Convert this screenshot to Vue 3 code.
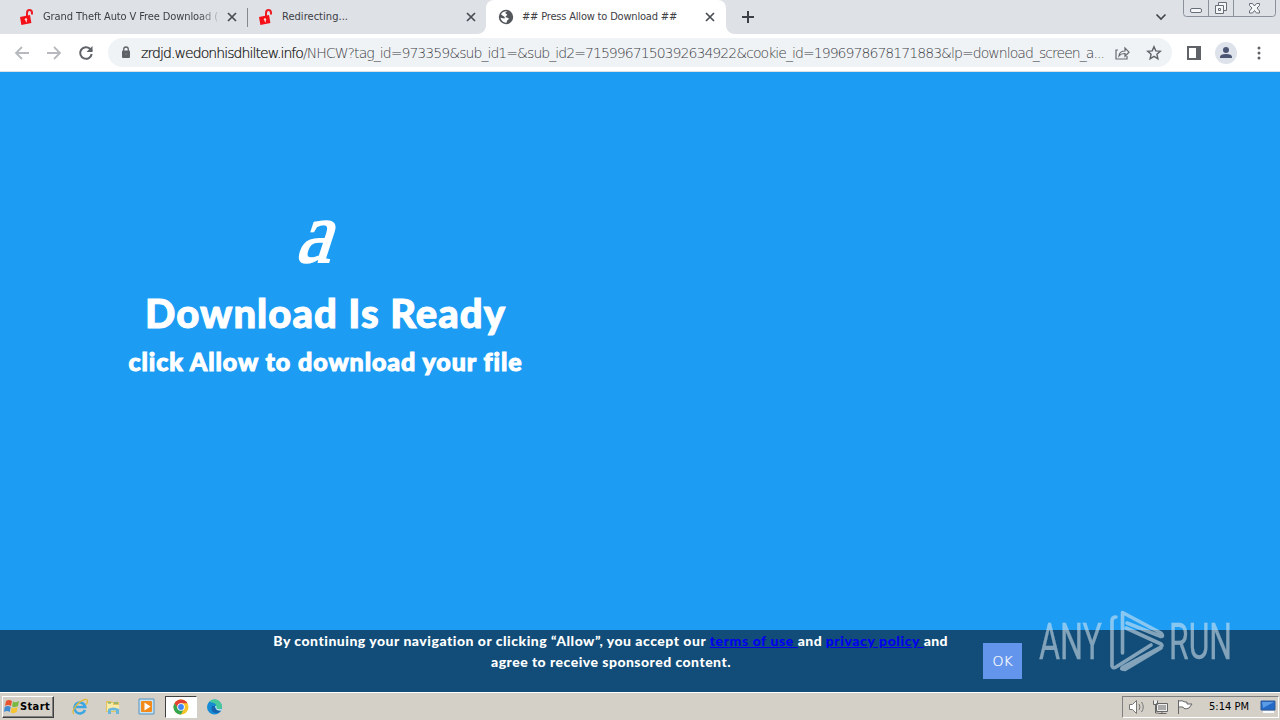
<script setup>
// Adjusts tracking so a label occupies the given width.
const vFit = {
  mounted(el, { value }) {
    const width = el.getBoundingClientRect().width
    el.style.letterSpacing = (value - width) / el.textContent.length + 'px'
  },
}
</script>

<template>
  <div class="screen">
    <header class="tabs">
      <div class="tab first">
        <svg class="lock" width="16" height="18" viewBox="0 0 16 18"><path d="M8 8V5Q8 2 10.500 2T13 5V6.500" fill="none" stroke="#ed1c24" stroke-width="2"/><path d="M1 9l10-2 1.400 8-10 2z" fill="#f50f16"/><circle cx="7" cy="11.400" r="1.200" fill="#ffd9d9"/><path d="M6.600 12h1l.3 2.200h-1z" fill="#ffd9d9"/></svg>
        <span class="title fade"><span v-fit="175">Grand Theft Auto V Free Download (</span></span>
        <svg class="close" width="10" height="10" viewBox="0 0 10 10"><path d="M1 1l8 8M9 1L1 9"/></svg>
      </div>
      <div class="tab second">
        <svg class="lock" width="16" height="18" viewBox="0 0 16 18"><path d="M8 8V5Q8 2 10.500 2T13 5V6.500" fill="none" stroke="#ed1c24" stroke-width="2"/><path d="M1 9l10-2 1.400 8-10 2z" fill="#f50f16"/><circle cx="7" cy="11.400" r="1.200" fill="#ffd9d9"/><path d="M6.600 12h1l.3 2.200h-1z" fill="#ffd9d9"/></svg>
        <span class="title"><span v-fit="66">Redirecting...</span></span>
        <svg class="close" width="10" height="10" viewBox="0 0 10 10"><path d="M1 1l8 8M9 1L1 9"/></svg>
      </div>
      <div class="tab active">
        <svg class="globe" width="16" height="16" viewBox="0 0 16 16"><circle cx="8" cy="8" r="7.200" fill="#54585d"/><path d="M9.500 2.300C7 3 6.800 4.500 8.500 5c1.300.5.500 1.500-.5 2-.7.500-.6 1.300.5 1.500l1.700.4c1 .3.500 1.600-.5 2-.8.400-.6 1.500-1.200 2.800-3 0-5.400-2.200-6-5l3.700.8c1 0 .8-1 .3-1.500C5.500 7 4 6.500 3 5.300 4.300 3 6.500 1.900 9.500 2.300z" fill="#fff"/></svg>
        <span class="title"><span v-fit="155">## Press Allow to Download ##</span></span>
        <svg class="close" width="10" height="10" viewBox="0 0 10 10"><path d="M1 1l8 8M9 1L1 9"/></svg>
      </div>
      <svg class="plus" width="12" height="12" viewBox="0 0 12 12"><path d="M6 0v12M0 6h12"/></svg>
      <svg class="chevron" width="12" height="8" viewBox="0 0 12 8"><path d="M1.500 1.500L6 6l4.500-4.500"/></svg>
      <svg class="controls" width="94" height="18" viewBox="0 0 94 18"><g fill="none" stroke="#8b919b"><path d="M.5 0v13.500q0 3 3 3h86q3 0 3-3V0M25.500 0v16M50.500 0v16"/><g stroke="#686e78" fill="#f5f6f8"><rect x="7.500" y="8.500" width="11" height="4" rx="1.500"/><path d="M35.500 2.500h8v8h-8z"/><path d="M32.500 5.500h8v8h-8zM35.500 8.500h2v2h-2z"/><path d="M66.500 3.500h3l2 2.500 2-2.500h3v2L74 8l2.500 3v2h-3l-2-2.500-2 2.500h-3v-2L69 8l-2.500-2.500z"/></g></g></svg>
    </header>

    <nav class="toolbar">
      <svg class="back" width="16" height="14" viewBox="0 0 16 14"><path d="M15 7H2M8 1L2 7l6 6"/></svg>
      <svg class="forward" width="16" height="14" viewBox="0 0 16 14"><path d="M1 7h13M8 1l6 6-6 6"/></svg>
      <svg class="reload" width="16" height="16" viewBox="0 0 16 16"><path d="M13.700 9A5.800 5.800 0 1 1 12 3.800L14 6" fill="none" stroke="#5f6368" stroke-width="2"/><path d="M14.500 1v6H8.500z" fill="#5f6368"/></svg>
      <div class="omnibox">
        <svg class="secure" width="10" height="13" viewBox="0 0 10 13"><rect x="1" y="4.500" width="8" height="7.500" rx="1" fill="#5f6368"/><path d="M2.700 5V3.300a2.300 2.300 0 0 1 4.600 0V5" fill="none" stroke="#5f6368" stroke-width="1.300"/><circle cx="5" cy="8" r="1" fill="#777"/></svg>
        <span class="url"><span class="host" v-fit="162">zrdjd.wedonhisdhiltew.info</span><span v-fit="801">/NHCW?tag_id=973359&amp;sub_id1=&amp;sub_id2=7159967150392634922&amp;cookie_id=1996978678171883&amp;lp=download_screen_a...</span></span>
        <svg class="share" width="17" height="16" viewBox="0 0 17 16"><path d="M4 5H2v9h11v-3M5 11q.5-5 6-5V3l4 4.200-4 4V8.500Q7 8.300 5 11z" fill="none" stroke="#666a70" stroke-width="1.200"/></svg>
        <svg class="star" width="16" height="16" viewBox="0 0 16 16"><path d="M8 1.700l1.800 4.200 4.500.4-3.400 3 1 4.500L8 11.400l-3.900 2.400 1-4.500-3.400-3 4.500-.4z" fill="none" stroke="#5f6368" stroke-width="1.400"/></svg>
      </div>
      <svg class="panel" width="14" height="14" viewBox="0 0 14 14"><path d="M1 1h12v12H1z" fill="none" stroke="#5f6368" stroke-width="2"/><path d="M9 1h4v12H9z" fill="#5f6368"/></svg>
      <svg class="avatar" width="22" height="22" viewBox="0 0 22 22"><circle cx="11" cy="11" r="11" fill="#dee2ea"/><circle cx="11" cy="8" r="3" fill="#4c5674"/><path d="M5 16v-1q0-3 6-3t6 3v1z" fill="#4c5674"/></svg>
      <svg class="dots" width="4" height="14" viewBox="0 0 4 14"><g fill="#5f6368"><circle cx="2" cy="2" r="1.500"/><circle cx="2" cy="7" r="1.500"/><circle cx="2" cy="12" r="1.500"/></g></svg>
    </nav>

    <main>
      <section class="message">
        <div class="emblem">a</div>
        <h1><span v-fit="361">Download Is Ready</span></h1>
        <h2><span v-fit="394">click Allow to download your file</span></h2>
      </section>
      <footer class="consent">
        <p>
          <span class="line"><span v-fit="437">By continuing your navigation or clicking “Allow”, you accept our </span><a v-fit="88">terms of use </a><span v-fit="28">and </span><a v-fit="98">privacy policy </a><span v-fit="24">and</span></span>
          <span class="line second-line"><span v-fit="240">agree to receive sponsored content.</span></span>
        </p>
        <button><span v-fit="20">OK</span></button>
      </footer>
      <svg class="watermark" width="200" height="72" viewBox="0 0 200 72">
        <g fill="#e4edf2" stroke="#e4edf2" stroke-width=".3" font-family="Roboto, sans-serif" font-size="50">
          <text x="3" y="54" textLength="63" lengthAdjust="spacingAndGlyphs">ANY</text>
          <text x="133" y="54" textLength="63" lengthAdjust="spacingAndGlyphs">RUN</text>
        </g>
        <g fill="none" stroke="#e4edf2" stroke-width="3.600" stroke-linecap="round" stroke-linejoin="round">
          <path d="M86.500 48V7.500L125 28q3 3 0 3.500L91 18"/>
          <path d="M80 12q-4 0-4 4v45q1 3 4 1l35-22"/>
          <path d="M90 23l35 16q2 1.500 0 3L89 61q-4 2-3 3l3 .5L125 43"/>
        </g>
      </svg>
    </main>

    <div class="taskbar">
      <div class="start">
        <svg width="17" height="16" viewBox="0 0 17 16"><path d="M3 2q3-2 6 0L8 7Q5 5 2 7z" fill="#e8542d"/><path d="M10 2.500q3 1.500 6-.5l-1 5q-3 2-6 .5z" fill="#79b843"/><path d="M1.700 8Q5 6 7.700 8l-1 5Q4 11 1 13z" fill="#438bd1"/><path d="M8.700 8.500q3 1.500 6-.5l-1 5q-3 2-6 .5z" fill="#f6c431"/></svg>
        <b v-fit="30">Start</b>
      </div>
      <svg class="app ie" width="18" height="18" viewBox="0 0 18 18"><path d="M14 12A5.500 5.500 0 1 1 14.300 9H5" fill="none" stroke="#3da5e2" stroke-width="2.500"/><path d="M3 16C-1 14 7 3 14 1.500c4-.4 2.500 3 1 5" fill="none" stroke="#e0b83b" stroke-width="1.300"/></svg>
      <svg class="app folder" width="16" height="18" viewBox="0 0 16 18"><path d="M1 3h5l1 1h7v10H1z" fill="#dfc466"/><path d="M2 5h6v2h6v6H2z" fill="#fbeba6"/><path d="M3 5h3M9 5h4" stroke="#57a66a"/><path d="M3 11q5-3 11 0v5h-3v-3.500H6V16H3z" fill="#69b7dc"/></svg>
      <svg class="app media" width="17" height="18" viewBox="0 0 17 18"><path d="M1 1h15v15H1z" fill="#c3e3f5" stroke="#5795bf"/><rect x="3" y="3" width="11" height="11" rx="1" fill="#f28b19"/><path d="M6.500 4.500l6 4-6 4z" fill="#fff"/></svg>
      <div class="current"><svg width="16" height="16" viewBox="0 0 16 16"><circle cx="8" cy="8" r="7.500" fill="#f7c52b"/><path d="M1.500 4.200A7.500 7.500 0 0 1 14.500 4.200H8L5 10z" fill="#e34133"/><path d="M1.500 4.200A7.500 7.500 0 0 0 8 15.500l3-6H5z" fill="#35a552"/><circle cx="8" cy="8" r="3.800" fill="#fff"/><circle cx="8" cy="8" r="2.900" fill="#4285f4"/></svg></div>
      <svg class="app edge" width="17" height="18" viewBox="0 0 17 18"><circle cx="8.500" cy="9" r="7.500" fill="#168bd4"/><path d="M3 4Q8-1 13 3q5 5 2 8-3 1-5-1 1-4-2-5-3-1-5-1z" fill="#48c999"/><path d="M6 8q-2 6 4 7 3 0 5-2-6 0-6-5z" fill="#1762ad"/><path d="M9 8q3 0 1 2 2 2 5 1l1 1q-6 2-7-4z" fill="#d5eef1"/></svg>
      <div class="tray">
        <svg class="sound" width="18" height="16" viewBox="0 0 18 16"><path d="M1.500 5.500h3l4-4v13l-4-4h-3z" fill="#fff" stroke="#777"/><path d="M11 5q2 3 0 6M13.500 3q3.500 5 0 10" fill="none" stroke="#777"/></svg>
        <svg class="network" width="17" height="16" viewBox="0 0 17 16"><g fill="#eee" stroke="#666"><path d="M4.500 4.500h11v8h-11zM6.500 14.500h8M10 13v2M1.500 1.500v4h4v-4M3.500 6v8h3"/><path d="M6 6h8v5H6z" fill="#aaa" stroke="none"/></g></svg>
        <svg class="flag" width="17" height="16" viewBox="0 0 17 16"><path d="M2.500 1v14M3 2q3-1 6 1h2v2h5l-3 4q-5 2-6-1H3" fill="#fff" stroke="#666"/></svg>
        <span class="time"><span v-fit="40">5:14 PM</span></span>
        <svg class="desktop" width="16" height="14" viewBox="0 0 16 14"><path d="M1 1h14v9H1z" fill="#2369c6" stroke="#315a9c"/><path d="M2 2h12L3 8z" fill="#5b9ce6"/><path d="M3 12h11" stroke="#f5fbff" stroke-width="2"/></svg>
      </div>
    </div>
  </div>
</template>

<style>
body { margin: 0; overflow: hidden; }
</style>

<style scoped>
* { box-sizing: border-box; }
svg { display: block; flex: none; }
.screen { width: 1280px; height: 720px; display: flex; flex-direction: column; font-family: "DejaVu Sans Condensed", "DejaVu Sans", sans-serif; }
.tabs { height: 34px; flex: none; background: #dee1e6; display: flex; align-items: flex-start; }
.tab { height: 34px; display: flex; align-items: center; position: relative; }
.first { width: 247px; padding-left: 19px; }
.first::after { content: ""; position: absolute; right: -1px; top: 8px; height: 19px; border-left: 1px solid #858a91; }
.second { width: 239px; padding-left: 11px; }
.active { width: 240px; padding-left: 12px; background: #fff; border-radius: 8px 8px 0 0; }
.active::before, .active::after { content: ""; position: absolute; bottom: 0; width: 8px; height: 8px; }
.active::before { left: -8px; background: radial-gradient(circle at 0 0, transparent 7.500px, #fff 8px); }
.active::after { right: -8px; background: radial-gradient(circle at 100% 0, transparent 7.500px, #fff 8px); }
.title { font-size: 11px; line-height: 16px; color: #3c4045; white-space: pre; margin-left: 8px; width: 174px; }
.title > span { display: inline-block; white-space: pre; }
.fade { mask-image: linear-gradient(90deg, #000 155px, transparent 180px); }
.close { margin-left: 10px; }
.active .close { margin-left: 9px; }
.close path { fill: none; stroke: #484c53; stroke-width: 1.700; }
.plus { margin: 11px 0 0 16px; }
.plus path { stroke: #3d4147; stroke-width: 2; }
.chevron { margin: 13px 0 0 401px; }
.chevron path { fill: none; stroke: #44484e; stroke-width: 1.700; }
.controls { margin-left: 16px; }
.toolbar { height: 38px; flex: none; display: flex; align-items: center; background: #fff; border-bottom: 1px solid #dce1e6; }
.back { margin-left: 14px; }
.forward { margin-left: 16px; }
.back path, .forward path { fill: none; stroke: #b6b9bd; stroke-width: 1.800; }
.reload { margin-left: 16px; }
.omnibox { width: 1064px; height: 29px; margin-left: 14px; border-radius: 15px; background: #f0f3f5; display: flex; align-items: center; }
.secure { margin-left: 13px; }
.url { width: 970px; margin-left: 10px; font: 200 14px/20px "DejaVu Sans", sans-serif; color: #3c4045; white-space: nowrap; }
.url > span { display: inline-block; white-space: pre; }
.url .host { color: #000; -webkit-text-stroke: .2px #222; }
.share { margin-left: 3px; }
.star { margin-left: 15px; }
.panel { margin-left: 15px; }
.avatar { margin-left: 14px; }
.dots { margin-left: 20px; }
main { height: 620px; flex: none; background: #1c9cf3; position: relative; display: flex; flex-direction: column; }
.message { width: 651px; height: 558px; padding-top: 130px; color: #fff; text-align: center; font-family: Lato, sans-serif; }
.emblem { height: 86px; font: 87px/86px "Liberation Serif", serif; transform: translate(-4px, -12px) skewX(-18deg) scaleX(.91); -webkit-text-stroke: 1.800px #fff; }
h1, h2 { margin: 0; font-weight: 900; white-space: nowrap; -webkit-text-stroke: 1px #fff; }
h1 { font-size: 40px; line-height: 48px; margin-top: 1px; }
h2 { font-size: 25px; line-height: 32px; margin-top: 8px; }
h1 span, h2 span { display: inline-block; }
.consent { height: 62px; background: #114d78; display: flex; color: #fff; font: 900 14px/21px Lato, sans-serif; }
.consent p { width: 675px; margin: 0 0 0 273px; }
.line { display: flex; justify-content: center; height: 21px; }
.second-line { padding-left: 1px; }
.line > * { white-space: pre; flex: none; }
.line a { color: #0000ee; text-decoration: underline; }
button { width: 39px; height: 36px; margin: 13px 0 0 35px; border: 0; padding: 0; background: #6495ed; color: #fff; font: 200 14px/36px "DejaVu Sans", sans-serif; -webkit-text-stroke: .2px #fff; }
button span { display: inline-block; }
.watermark { position: absolute; left: 1036px; top: 533px; opacity: .54; overflow: visible; }
.taskbar { height: 28px; flex: none; background: #d4d0c8; border-top: 1px solid #fff; display: flex; align-items: center; }
.start { width: 52px; height: 22px; margin-left: 2px; border: 1px solid; border-color: #fff #404040 #404040 #fff; box-shadow: inset -1px -1px #808080; display: flex; align-items: center; }
.start b { font-size: 11px; }
.ie { margin-left: 17px; }
.folder { margin-left: 16px; }
.media { margin-left: 17px; }
.current { margin-left: 10px; width: 32px; height: 22px; background: #fff; border: 1px solid; border-color: #404040 #fff #fff #404040; display: grid; place-items: center; }
.edge { margin-left: 9px; }
.tray { margin-left: auto; margin-right: 1px; width: 157px; height: 22px; border: 1px solid; border-color: #808080 #fff #fff #808080; display: flex; align-items: center; }
.sound { margin-left: 5px; }
.network { margin-left: 6px; }
.flag { margin-left: 7px; }
.time { margin-left: 16px; font-size: 11px; }
.time span { display: inline-block; white-space: nowrap; }
.desktop { margin-left: 11px; }
</style>
